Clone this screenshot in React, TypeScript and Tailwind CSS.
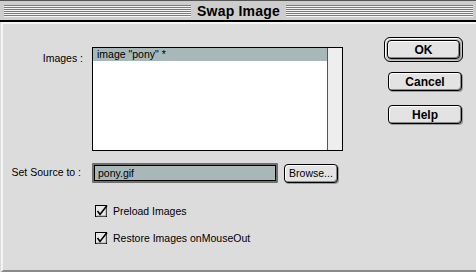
import React from 'react';

const font = "font-['Liberation_Sans',Arial,sans-serif]";

const Stripes = () => (
  <div className="flex-1 flex flex-col">
    {[0, 1, 2, 3, 4, 5].map((i) => (
      <div key={i}>
        <div className="h-px bg-[#7b7b7b]" />
        <div className="h-px bg-[#f4f4f4]" />
      </div>
    ))}
  </div>
);

const MacButton: React.FC<{ label: string; width: string; bold?: boolean }> = ({ label, width, bold }) => (
  <div
    className={`${width} h-[19px] rounded-[4px] border border-black bg-[#e3e3e3] shadow-[inset_1px_1px_0_#ffffff,inset_-1px_-1px_0_#8a8a8a,1px_1px_0_#9a9a9a] flex items-center justify-center text-black leading-none ${
      bold ? 'font-bold text-[12px]' : 'text-[10.5px]'
    }`}
  >
    {label}
  </div>
);

const CheckBox: React.FC<{ label: string }> = ({ label }) => (
  <div className="h-[13px] flex items-center gap-[5px]">
    <svg width="13" height="13" viewBox="0 0 13 13">
      <rect x="0.5" y="0.5" width="11" height="11" fill="#e8e8e8" stroke="#000" />
      <line x1="1.5" y1="11" x2="11" y2="11" stroke="#9a9a9a" />
      <line x1="11" y1="1.5" x2="11" y2="11" stroke="#9a9a9a" />
      <path d="M2.5 6 L5 9.5 L12 0.5" fill="none" stroke="#000" strokeWidth="1.6" />
    </svg>
    <span className="text-[10.5px] leading-none text-black">{label}</span>
  </div>
);

export default function App() {
  return (
    <div className={`w-[476px] h-[272px] bg-[#dcdcdc] flex flex-col overflow-hidden ${font}`}>
      {/* title bar */}
      <div className="h-[20px] bg-[#cdcdcd] border-t border-[#555] flex items-center gap-[6px] pl-[4px] pr-[3px]">
        <Stripes />
        <span className="text-[14px] font-bold text-black tracking-[0.2px] leading-none">Swap Image</span>
        <Stripes />
      </div>
      <div className="h-[2px] bg-black" />

      {/* body */}
      <div className="flex-1 flex border-l-2 border-t-2 border-l-[#f4f4f4] border-t-[#f4f4f4] border-b-2 border-b-[#8a8a8a] ml-px">
        <div className="w-[380px] flex flex-col pt-[23px]">
          <div className="flex">
            <div className="w-[80px] text-right text-[10.5px] text-black pt-[4px]">Images :</div>
            <div className="ml-[9px] w-[251px] h-[104px] border border-black bg-white flex">
              <div className="flex-1">
                <div className="h-[13px] bg-[#a8b8b8] text-[10.5px] text-black leading-[13px] pl-[4px]">image "pony" *</div>
              </div>
              <div className="w-[15px] bg-[#eeeeee] border-l border-[#555]" />
            </div>
          </div>

          <div className="flex items-center mt-[12px]">
            <div className="w-[80px] text-right text-[10.5px] text-black pr-[2px]">Set Source to :</div>
            <div className="ml-[9px] w-[186px] h-[20px] border-2 border-[#6f6f6f] rounded-[1px]">
              <div className="h-full border border-black bg-[#a8b8b8] text-[10.5px] text-black leading-[14px] pl-[3px]">pony.gif</div>
            </div>
            <div className="ml-[6px]">
              <MacButton label="Browse..." width="w-[54px]" />
            </div>
          </div>

          <div className="flex flex-col gap-[14px] mt-[22px] ml-[92px]">
            <CheckBox label="Preload Images" />
            <CheckBox label="Restore Images onMouseOut" />
          </div>
        </div>

        <div className="flex flex-col items-start pt-[13px] pl-[1px] gap-[10px]">
          <div className="p-[2px] rounded-[6px] border border-black bg-[#c8c8c8] shadow-[inset_1px_1px_0_#ffffff]">
            <MacButton label="OK" width="w-[73px]" bold />
          </div>
          <div className="ml-[4px] flex flex-col gap-[14px]">
            <MacButton label="Cancel" width="w-[74px]" bold />
            <MacButton label="Help" width="w-[74px]" bold />
          </div>
        </div>
      </div>
    </div>
  );
}
